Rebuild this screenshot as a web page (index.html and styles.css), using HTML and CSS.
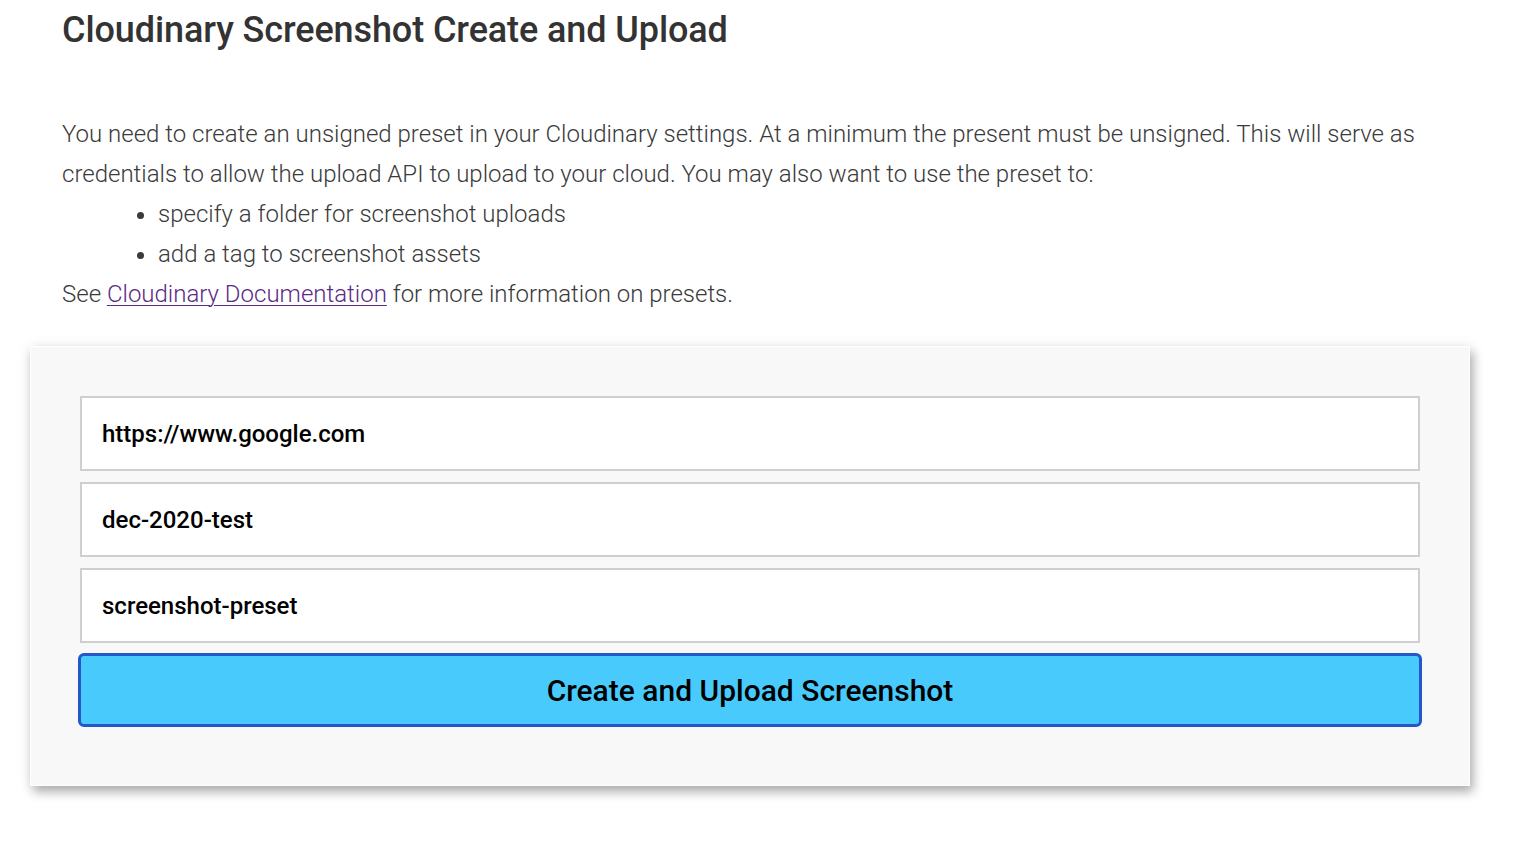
FILE: index.html
```html
<!DOCTYPE html>
<html>
<head>
<meta charset="utf-8">
<link rel="stylesheet" href="styles.css">
</head>
<body>
<main class="page">
  <h1 class="title">Cloudinary Screenshot Create and Upload</h1>
  <div class="intro">
    <p class="para">You need to create an unsigned preset in your Cloudinary settings. At a minimum the present must be unsigned. This will serve as credentials to allow the upload API to upload to your cloud. You may also want to use the preset to:</p>
    <ul class="list">
      <li>specify a folder for screenshot uploads</li>
      <li>add a tag to screenshot assets</li>
    </ul>
    <p class="para">See <a class="link" href="#">Cloudinary Documentation</a> for more information on presets.</p>
  </div>
  <form class="card">
    <input class="field" type="text" value="https://www.google.com">
    <input class="field" type="text" value="dec-2020-test">
    <input class="field" type="text" value="screenshot-preset">
    <button class="btn" type="button">Create and Upload Screenshot</button>
  </form>
</main>
</body>
</html>
```
FILE: styles.css
```css
html, body {
  margin: 0;
  padding: 0;
  background: #ffffff;
}
body {
  font-family: Roboto, "Liberation Sans", sans-serif;
  color: #333;
}
.page {
  padding: 0 48px 60px 30px;
}
.title {
  margin: 0;
  padding: 9px 0 0 32px;
  font-size: 36px;
  line-height: 42px;
  font-weight: 500;
  color: #333;
  letter-spacing: -0.1px;
}
.intro {
  margin-top: 63px;
  padding-left: 32px;
  font-size: 24px;
  font-weight: 300;
  line-height: 40px;
  color: #3a3a3a;
}
.para {
  margin: 0;
}
.list {
  margin: 0;
  padding-left: 96px;
  list-style: disc;
}
.link {
  color: #5b2a86;
  text-decoration: underline;
  text-underline-offset: 3px;
  text-decoration-thickness: 1px;
}
.card {
  margin-top: 32px;
  background: #f8f8f8;
  border: 1px solid #fff;
  padding: 49px 49px 58px;
  display: flex;
  flex-direction: column;
  gap: 11px;
  box-shadow: 3px 6px 10px rgba(0,0,0,0.3), 0 0 14px rgba(0,0,0,0.07);
}
.field {
  box-sizing: border-box;
  height: 75px;
  width: 100%;
  margin: 0;
  border: 2px solid #cfcfcf;
  background: #fff;
  padding: 0 20px;
  font-family: Roboto, "Liberation Sans", sans-serif;
  font-size: 24px;
  font-weight: 500;
  color: #000;
  outline: none;
}
.btn {
  box-sizing: border-box;
  margin: -1px -2px 0;
  height: 74px;
  background: #48cbfc;
  border: 3px solid #2457c9;
  border-radius: 6px;
  font-family: Roboto, "Liberation Sans", sans-serif;
  font-size: 30px;
  font-weight: 500;
  color: #000;
  cursor: pointer;
}
```
